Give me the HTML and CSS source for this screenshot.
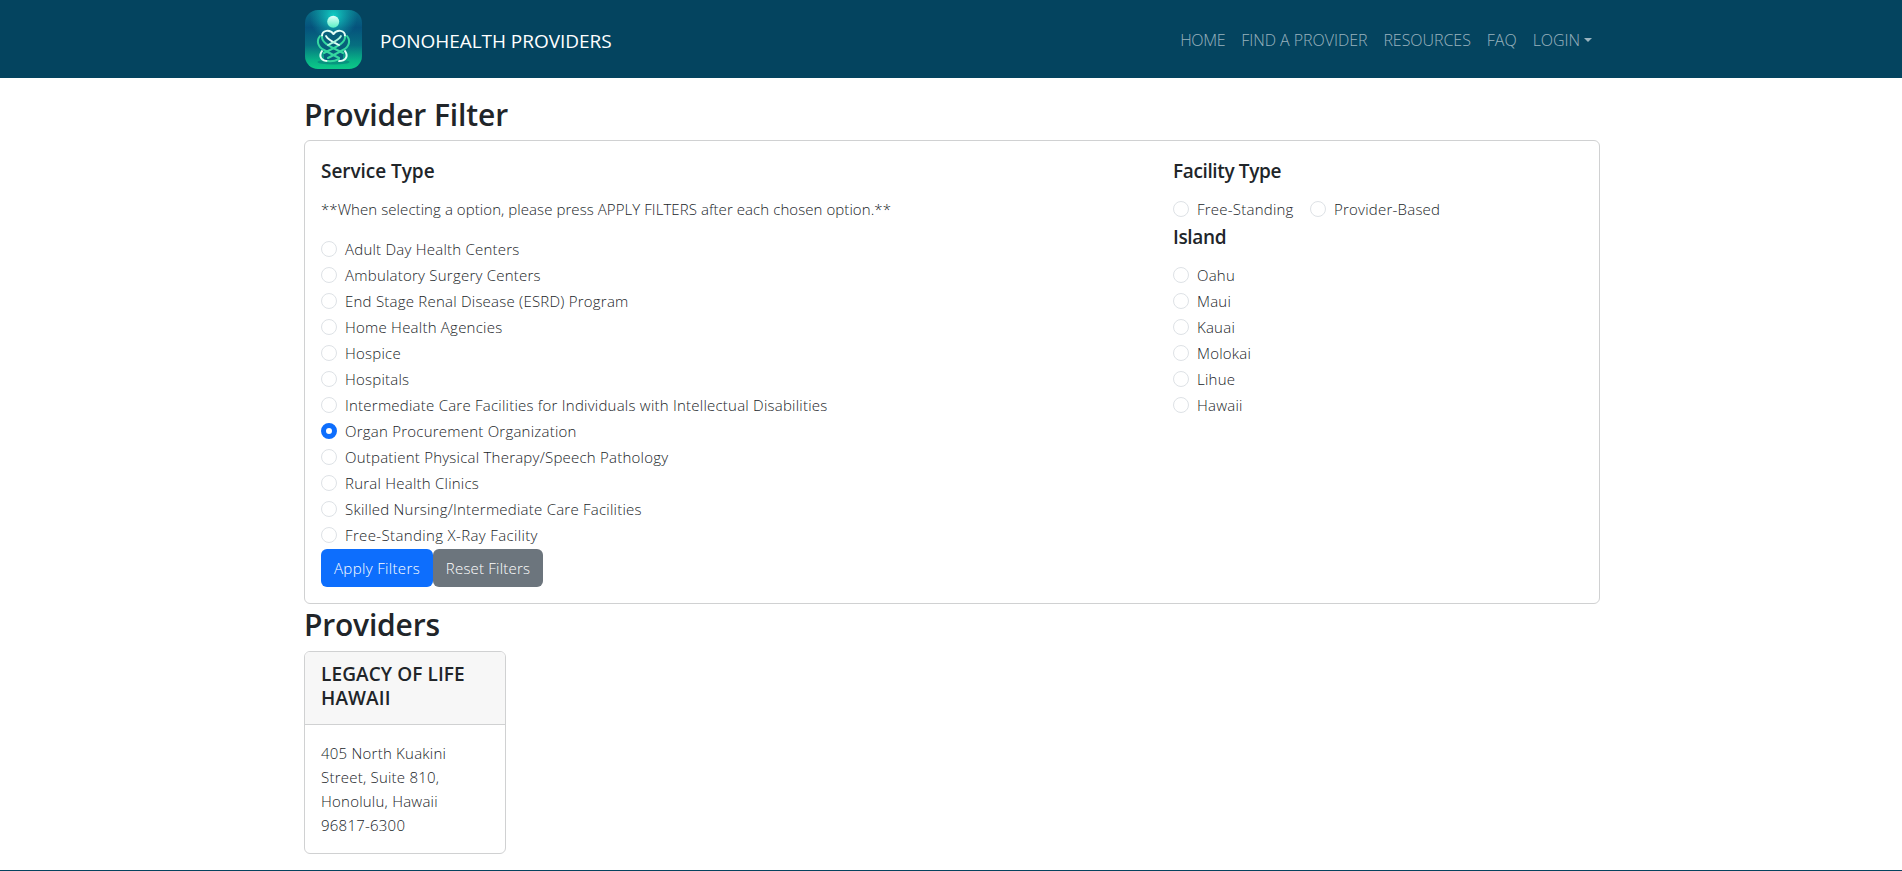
FILE: index.html
```html
<!DOCTYPE html>
<html lang="en">
<head>
<meta charset="utf-8">
<title>PonoHealth Providers</title>
<link rel="stylesheet" href="styles.css">
</head>
<body>
<nav class="navbar">
  <div class="container nav-inner">
    <a class="brand">
      <svg class="logo" viewBox="0 0 57 59" width="57" height="59" fill="none" stroke-linecap="round">
        <defs>
          <linearGradient id="bg" x1="0" y1="0" x2="0" y2="1"><stop offset="0" stop-color="#087088"/><stop offset=".3" stop-color="#05527c"/><stop offset=".6" stop-color="#066f80"/><stop offset=".85" stop-color="#08b286"/><stop offset="1" stop-color="#0cca88"/></linearGradient>
          <radialGradient id="glow" cx=".5" cy=".1" r=".42"><stop offset="0" stop-color="#12d5c8" stop-opacity=".95"/><stop offset="1" stop-color="#12b5b8" stop-opacity="0"/></radialGradient>
          <linearGradient id="head" x1="0" y1="0" x2="0" y2="1"><stop offset="0" stop-color="#e0fffa"/><stop offset="1" stop-color="#58f0c4"/></linearGradient>
        </defs>
        <rect width="57" height="59" rx="13" fill="url(#bg)"/>
        <rect width="57" height="59" rx="13" fill="url(#glow)"/>
        <ellipse cx="28.500" cy="52" rx="16" ry="2.500" fill="#067c79" opacity=".6"/>
        <circle cx="28.200" cy="11.800" r="6" fill="url(#head)"/>
        <path d="M28.500 24C23 17 15 22 16 29L14 33L19 41V50H38V41L43 33L41 29C42 22 34 17 28.500 24Z" fill="#07607a"/>
        <g stroke="#e2fff6" stroke-width="2">
          <path d="M17 41C13 47 17 51 23 51"/><path d="M40 41C44 47 40 51 34 51"/>
          <path d="M28.500 24C32 19 40 20 40 26"/><path d="M28.500 24C25 19 17 20 17 26"/>
        </g>
        <g stroke="#35d8a0" stroke-width="2">
          <path d="M15 26C11 31 13 37 19 40L34 48"/>
          <path d="M17 27C17 33 24 36 38 43"/>
          <path d="M42 26C46 31 44 37 38 40L23 48"/>
          <path d="M40 27C40 33 33 36 19 43"/>
          <path d="M23 51C27 52 30 51 34 49"/>
        </g>
        <path d="M21 26C23 30 28 32 34 35" stroke="#e2fff6" stroke-width="1.800"/>
        <path d="M36 26C34 30 29 32 23 35" stroke="#a9f7dd" stroke-width="1.800"/>
      </svg>
      <span class="brand-name">PONOHEALTH PROVIDERS</span>
    </a>
    <div class="nav-links">
      <a class="home">HOME</a><a>FIND A PROVIDER</a><a>RESOURCES</a><a>FAQ</a><a class="dropdown">LOGIN</a>
    </div>
  </div>
</nav>
<main class="container">
  <h2>Provider Filter</h2>
  <form class="card filter">
    <section>
      <h5 class="service-title">Service Type</h5>
      <p class="note">**When selecting a option, please press APPLY FILTERS after each chosen option.**</p>
      <label class="check"><input type="radio" name="s"><span>Adult Day Health Centers</span></label>
      <label class="check"><input type="radio" name="s"><span>Ambulatory Surgery Centers</span></label>
      <label class="check"><input type="radio" name="s"><span>End Stage Renal Disease (ESRD) Program</span></label>
      <label class="check"><input type="radio" name="s"><span>Home Health Agencies</span></label>
      <label class="check"><input type="radio" name="s"><span>Hospice</span></label>
      <label class="check"><input type="radio" name="s"><span>Hospitals</span></label>
      <label class="check"><input type="radio" name="s"><span>Intermediate Care Facilities for Individuals with Intellectual Disabilities</span></label>
      <label class="check"><input type="radio" name="s" checked><span>Organ Procurement Organization</span></label>
      <label class="check"><input type="radio" name="s"><span>Outpatient Physical Therapy/Speech Pathology</span></label>
      <label class="check"><input type="radio" name="s"><span>Rural Health Clinics</span></label>
      <label class="check"><input type="radio" name="s"><span>Skilled Nursing/Intermediate Care Facilities</span></label>
      <label class="check xray"><input type="radio" name="s"><span>Free-Standing X-Ray Facility</span></label>
      <div class="buttons"><button type="button" class="btn apply">Apply Filters</button><button type="button" class="btn reset">Reset Filters</button></div>
    </section>
    <section>
      <h5>Facility Type</h5>
      <div class="inline">
        <label class="check first"><input type="radio" name="f"><span>Free-Standing</span></label>
        <label class="check"><input type="radio" name="f"><span>Provider-Based</span></label>
      </div>
      <h5>Island</h5>
      <label class="check"><input type="radio" name="i"><span>Oahu</span></label>
      <label class="check"><input type="radio" name="i"><span>Maui</span></label>
      <label class="check"><input type="radio" name="i"><span>Kauai</span></label>
      <label class="check"><input type="radio" name="i"><span>Molokai</span></label>
      <label class="check"><input type="radio" name="i"><span>Lihue</span></label>
      <label class="check"><input type="radio" name="i"><span>Hawaii</span></label>
    </section>
  </form>
  <h2 class="providers-title">Providers</h2>
  <article class="card provider">
    <header><h5>LEGACY OF LIFE<br>HAWAII</h5></header>
    <p>405 North Kuakini<br>Street, Suite 810,<br>Honolulu, Hawaii<br>96817-6300</p>
  </article>
</main>
<footer class="footer"></footer>
</body>
</html>
```
FILE: styles.css
```css
* { box-sizing: border-box; }
html { overflow: hidden; }
body {
  margin: 0;
  height: 871px;
  overflow: hidden;
  background: #fff;
  color: #212529;
  font: 300 15px/24px "Open Sans", "Noto Sans", sans-serif;
  letter-spacing: 0.23px;
}
h2, h5, p { margin: 0; }
h2 { font-size: 30px; font-weight: 600; line-height: 38.4px; padding-top: 2px; margin-bottom: 6px; letter-spacing: -0.1px; }
.providers-title { letter-spacing: -0.2px; }
h5 { font-size: 19px; font-weight: 600; line-height: 24px; padding-top: 2px; margin-bottom: 14px; letter-spacing: -0.36px; }
.service-title { letter-spacing: -0.04px; }
.container { width: 1296px; margin-left: 304px; }
.navbar { height: 78px; background: #04445f; }
.nav-inner { display: flex; align-items: center; justify-content: space-between; height: 78px; }
.brand { display: flex; align-items: center; color: #fff; font-size: 19px; font-weight: 400; padding-left: 1px; }
.logo { display: block; }
.brand-name { margin-left: 18px; padding-top: 4px; letter-spacing: -0.03px; }
.nav-links { display: flex; gap: 16px; padding: 1px 8px 0 0; color: rgba(255, 255, 255, .6); font-size: 16px; letter-spacing: -0.04px; }
.home { letter-spacing: -0.35px; }
.dropdown::after {
  content: "";
  display: inline-block;
  margin-left: 4px;
  vertical-align: 4px;
  border: 4.5px solid transparent;
  border-top-color: currentColor;
  border-bottom: 0;
}
main { padding-top: 16px; }
.card { border: 1px solid #d0d1d2; border-radius: 6px; background: #fff; }
.filter { display: grid; grid-template-columns: 836px 1fr; gap: 16px; padding: 16px; height: 464px; }
.note { margin-bottom: 16px; letter-spacing: 0.07px; }
.check { display: flex; align-items: center; height: 24px; margin-bottom: 2px; white-space: nowrap; }
.check input { appearance: none; flex: none; width: 16px; height: 16px; margin: 0 8px 0 0; border: 1px solid #dee2e6; border-radius: 50%; background: #fff; }
.check input:checked { border: 5px solid #0d6efd; }
.xray { letter-spacing: 0.36px; }
.inline { display: flex; gap: 16px; }
.first { width: 121px; }
.buttons { display: flex; }
.btn { width: 112px; height: 38px; padding: 0; border: 0; border-radius: 6px; color: #fff; font: inherit; letter-spacing: 0.35px; }
.apply { background: #0d6efd; }
.reset { width: 110px; background: #6c757d; letter-spacing: 0.2px; }
.provider { width: 202px; height: 203px; overflow: hidden; }
.provider header { height: 73px; padding: 8px 16px; background: #f7f7f7; border-bottom: 1px solid #d0d1d2; }
.provider h5 { letter-spacing: 0.1px; }
.provider p { padding: 16px; }
.footer { height: 2px; margin-top: 16px; background: #04445f; }
```
